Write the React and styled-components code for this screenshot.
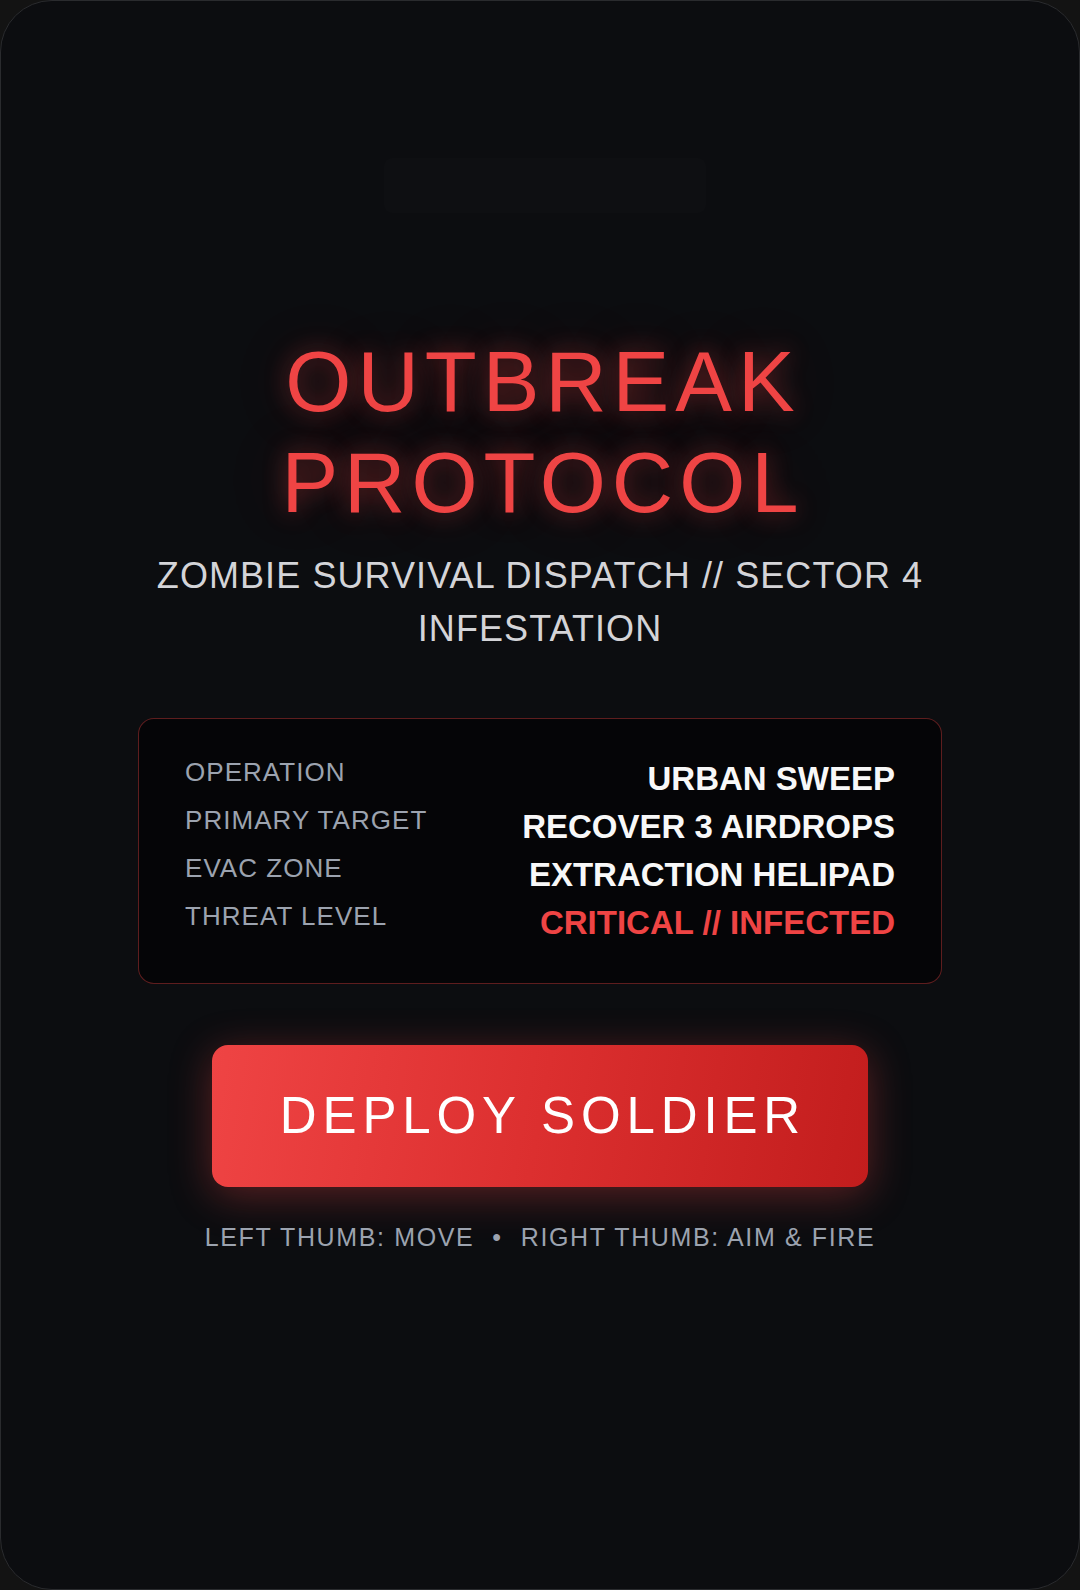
import React from "react";
import styled, { createGlobalStyle } from "styled-components";

const GlobalStyle = createGlobalStyle`
  html, body {
    margin: 0;
    padding: 0;
    background: #131313;
  }
  * {
    box-sizing: border-box;
  }
`;

const Screen = styled.div`
  position: relative;
  width: 1080px;
  height: 1590px;
  padding-bottom: 6px;
  border-radius: 52px;
  border: 1px solid #2a2b2e;
  background: #0c0d10;
  overflow: hidden;
  display: flex;
  align-items: center;
  justify-content: center;
  font-family: "Liberation Sans", Arial, sans-serif;
`;

const HudGhost = styled.div`
  position: absolute;
  top: 157px;
  left: 383px;
  width: 322px;
  height: 55px;
  border-radius: 8px;
  background: rgba(255, 255, 255, 0.011);
  color: rgba(255, 255, 255, 0.022);
  display: flex;
  align-items: center;
  justify-content: center;
  font-size: 26px;
  letter-spacing: 0.1em;
`;

const Column = styled.div`
  width: 804px;
  display: flex;
  flex-direction: column;
  align-items: center;
  text-align: center;
`;

const Title = styled.h1`
  margin: 0;
  font-size: 85px;
  line-height: 1.18;
  font-weight: 400;
  letter-spacing: 0.07em;
  padding-left: 0.07em;
  color: #ef4444;
  text-shadow: 0 0 24px rgba(239, 68, 68, 0.45), 0 0 70px rgba(239, 68, 68, 0.18);
`;

const Subtitle = styled.p`
  margin: 17px 0 0;
  font-size: 36px;
  line-height: 1.47;
  letter-spacing: 0.03em;
  color: #d4d4d8;
`;

const Briefing = styled.div`
  width: 100%;
  margin-top: 62px;
  padding: 36px 46px 35px;
  border: 1px solid rgba(239, 68, 68, 0.38);
  border-radius: 16px;
  background: #050507;
  display: flex;
  flex-direction: column;
`;

const Row = styled.div`
  height: 48.2px;
  display: flex;
  justify-content: space-between;
  align-items: flex-start;
`;

const Label = styled.span`
  font-size: 26px;
  line-height: 34px;
  letter-spacing: 0.04em;
  color: #9ca3af;
`;

const Value = styled.span`
  font-size: 33px;
  line-height: 48px;
  font-weight: 700;
  color: ${(p) => (p.$alert ? "#ef4444" : "#f8f8f8")};
`;

const DeployButton = styled.button`
  margin-top: 61px;
  width: 656px;
  height: 142px;
  border: none;
  border-radius: 16px;
  background: linear-gradient(100deg, #ef4444 0%, #dc2f2f 50%, #c21d1d 100%);
  box-shadow: 0 8px 40px rgba(239, 68, 68, 0.35);
  color: #ffffff;
  font-family: inherit;
  font-size: 51px;
  letter-spacing: 0.115em;
  padding: 0 0 0 0.115em;
  cursor: pointer;
`;

const Controls = styled.p`
  margin: 36px 0 0;
  font-size: 25px;
  letter-spacing: 0.065em;
  color: #9ca3af;
`;

const Dot = styled.span`
  margin: 0 18px;
`;

const briefing = [
  { label: "OPERATION", value: "URBAN SWEEP" },
  { label: "PRIMARY TARGET", value: "RECOVER 3 AIRDROPS" },
  { label: "EVAC ZONE", value: "EXTRACTION HELIPAD" },
  { label: "THREAT LEVEL", value: "CRITICAL // INFECTED", alert: true },
];

export default function App() {
  return (
    <>
      <GlobalStyle />
      <Screen>
        <HudGhost>WAVE 00 · 000</HudGhost>
        <Column>
          <Title>
            OUTBREAK
            <br />
            PROTOCOL
          </Title>
          <Subtitle>ZOMBIE SURVIVAL DISPATCH // SECTOR 4 INFESTATION</Subtitle>
          <Briefing>
            {briefing.map((item) => (
              <Row key={item.label}>
                <Label>{item.label}</Label>
                <Value $alert={item.alert}>{item.value}</Value>
              </Row>
            ))}
          </Briefing>
          <DeployButton>DEPLOY SOLDIER</DeployButton>
          <Controls>
            LEFT THUMB: MOVE<Dot>•</Dot>RIGHT THUMB: AIM &amp; FIRE
          </Controls>
        </Column>
      </Screen>
    </>
  );
}
